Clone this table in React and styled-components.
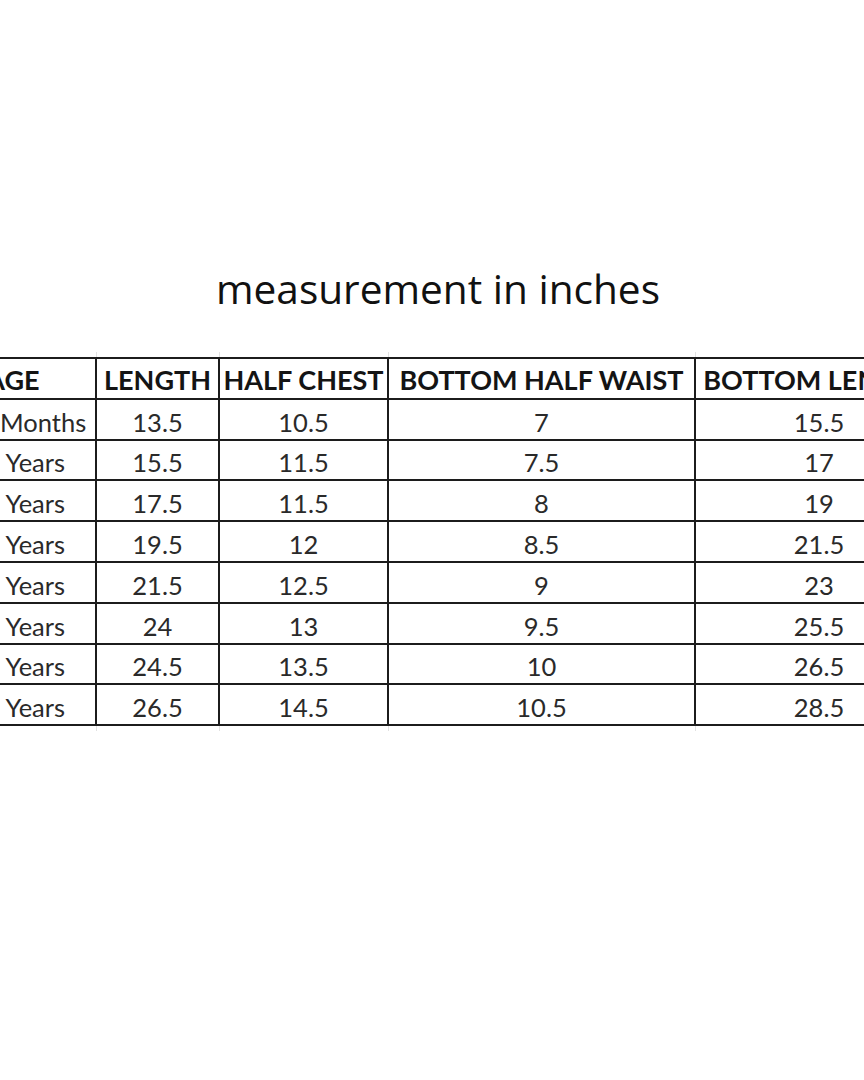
import styled, { createGlobalStyle } from "styled-components";

const GlobalStyle = createGlobalStyle`
    html, body {
        margin: 0;
        padding: 0;
        background: #ffffff;
    }
`;

const headers = ["AGE", "LENGTH", "HALF CHEST", "BOTTOM HALF WAIST", "BOTTOM LENGTH"];
const widths = [166, 123, 169, 307, 248];

const rows = [
    ["6-12 Months", "13.5", "10.5", "7", "15.5"],
    ["1-2 Years", "15.5", "11.5", "7.5", "17"],
    ["2-3 Years", "17.5", "11.5", "8", "19"],
    ["3-4 Years", "19.5", "12", "8.5", "21.5"],
    ["4-5 Years", "21.5", "12.5", "9", "23"],
    ["5-6 Years", "24", "13", "9.5", "25.5"],
    ["6-7 Years", "24.5", "13.5", "10", "26.5"],
    ["7-8 Years", "26.5", "14.5", "10.5", "28.5"],
];

const App = () => {
    return (
        <Page>
            <GlobalStyle />
            <Title>measurement in inches</Title>
            <Crop>
                <Sheet>
                    <colgroup>
                        {widths.map((w, i) => (
                            <col key={i} style={{ width: w }} />
                        ))}
                    </colgroup>
                    <tbody>
                        <GridRow>
                            {widths.map((w, i) => (
                                <GridCell key={i} />
                            ))}
                        </GridRow>
                        <tr>
                            {headers.map((h) => (
                                <HeadCell key={h}>{h}</HeadCell>
                            ))}
                        </tr>
                        {rows.map((row) => (
                            <tr key={row[0]}>
                                {row.map((value, i) => (
                                    <Cell key={i}>{value}</Cell>
                                ))}
                            </tr>
                        ))}
                        <GridRow>
                            {widths.map((w, i) => (
                                <GridCell key={i} />
                            ))}
                        </GridRow>
                    </tbody>
                </Sheet>
            </Crop>
        </Page>
    );
};

export default App;

const Page = styled.div`
    width: 864px;
    height: 1080px;
    background: #ffffff;
    display: flex;
    flex-direction: column;
    align-items: center;
    overflow: hidden;
`;

const Title = styled.h1`
    margin: 262px 0 0 0;
    font-family: "Open Sans", sans-serif;
    font-weight: 400;
    font-size: 40.6px;
    line-height: 54px;
    color: #111111;
    padding-left: 12px;
`;

const Crop = styled.div`
    width: 864px;
    margin-top: 36px;
    overflow: hidden;
`;

const Sheet = styled.table`
    margin-left: -71px;
    border-collapse: collapse;
    table-layout: fixed;
    width: 1013px;
    font-family: "Lato", "Liberation Sans", sans-serif;
    color: #2a2a2a;
`;

const GridRow = styled.tr`
    height: 6px;
`;

const GridCell = styled.td`
    padding: 0;
    border-left: 1px solid #e2e2e2;
    border-right: 1px solid #e2e2e2;
`;

const HeadCell = styled.td`
    height: 34.8px;
    padding: 4px 0 0 0;
    border: 2px solid #1c1c1c;
    text-align: center;
    font-weight: 700;
    font-size: 27px;
    line-height: 30px;
    color: #141414;
    white-space: nowrap;
    overflow: hidden;
`;

const Cell = styled.td`
    height: 33.8px;
    padding: 5px 0 0 0;
    border: 2px solid #1c1c1c;
    text-align: center;
    font-size: 25.5px;
    line-height: 30px;
    white-space: nowrap;
    overflow: hidden;
`;
